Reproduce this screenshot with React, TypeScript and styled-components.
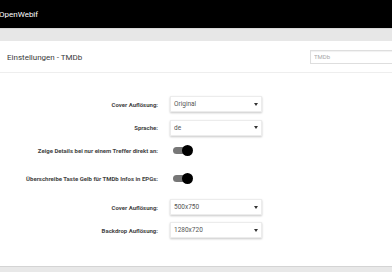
import styled, { createGlobalStyle } from "styled-components";

const GlobalStyle = createGlobalStyle`
  html, body {
    margin: 0;
    padding: 0;
    background: #fff;
    font-family: Roboto, "Liberation Sans", sans-serif;
  }
`;

const Page = styled.div`
  width: 392px;
  height: 272px;
  display: flex;
  flex-direction: column;
  overflow: hidden;
`;

const TopBar = styled.div`
  height: 28px;
  flex: none;
  background: #000;
  color: #fff;
  font-size: 8px;
  display: flex;
  align-items: center;
  text-indent: -1px;
`;

const GrayBand = styled.div`
  height: 13px;
  flex: none;
  background: #e7e7e7;
  border-top: 1px solid #d6d6d6;
  box-sizing: border-box;
`;

const Card = styled.div`
  height: 225px;
  flex: none;
  background: #fff;
  display: flex;
  flex-direction: column;
`;

const CardHeader = styled.div`
  height: 32px;
  flex: none;
  display: flex;
  align-items: center;
  justify-content: space-between;
  padding-left: 7px;
  border-bottom: 1px solid #eeeeee;
  box-sizing: border-box;
`;

const Title = styled.div`
  font-size: 8px;
  color: #3a3a3a;
  margin-top: 1px;
`;

const Search = styled.input`
  width: 90px;
  height: 14px;
  box-sizing: border-box;
  margin-right: -8px;
  border: 1px solid #dedede;
  box-shadow: inset 0 1px 1px rgba(0, 0, 0, 0.06);
  font-family: Roboto, "Liberation Sans", sans-serif;
  font-size: 6px;
  padding: 0 3px;
  color: #999;
  outline: none;
  &::placeholder {
    color: #a8a8a8;
  }
`;

const Form = styled.div`
  padding-top: 19px;
  display: flex;
  flex-direction: column;
`;

const Row = styled.div<{ $h: number }>`
  height: ${(p) => p.$h}px;
  display: grid;
  grid-template-columns: 158px 92px;
  column-gap: 12px;
  align-items: center;
`;

const Label = styled.div`
  text-align: right;
  font-size: 6px;
  font-weight: bold;
  color: #444;
  white-space: nowrap;
`;

const Select = styled.div`
  height: 16px;
  box-sizing: border-box;
  border: 1px solid #ececec;
  box-shadow: 0 1px 2px rgba(0, 0, 0, 0.22);
  display: flex;
  align-items: center;
  justify-content: space-between;
  padding: 0 3px;
  font-size: 6.5px;
  color: #555;
`;

const Caret = styled.span`
  width: 0;
  height: 0;
  border-left: 2.5px solid transparent;
  border-right: 2.5px solid transparent;
  border-top: 3px solid #333;
`;

const Toggle = styled.div`
  position: relative;
  margin-left: 3px;
  width: 17px;
  height: 7px;
  border-radius: 4px;
  background: #777;
`;

const Thumb = styled.span`
  position: absolute;
  right: -3px;
  top: -2px;
  width: 11px;
  height: 11px;
  border-radius: 50%;
  background: #000;
`;

const BottomBand = styled.div`
  flex: 1;
  background: #e8e8e8;
  border-top: 1px solid #d4d4d4;
`;

const SelectRow = ({ label, value, h }: { label: string; value: string; h: number }) => (
  <Row $h={h}>
    <Label>{label}</Label>
    <Select>
      <span>{value}</span>
      <Caret />
    </Select>
  </Row>
);

const ToggleRow = ({ label, h }: { label: string; h: number }) => (
  <Row $h={h}>
    <Label>{label}</Label>
    <div>
      <Toggle>
        <Thumb />
      </Toggle>
    </div>
  </Row>
);

export default function App() {
  return (
    <Page>
      <GlobalStyle />
      <TopBar>OpenWebif</TopBar>
      <GrayBand />
      <Card>
        <CardHeader>
          <Title>Einstellungen - TMDb</Title>
          <Search placeholder="TMDb" />
        </CardHeader>
        <Form>
          <SelectRow label="Cover Auflösung:" value="Original" h={24} />
          <SelectRow label="Sprache:" value="de" h={23} />
          <ToggleRow label="Zeige Details bei nur einem Treffer direkt an:" h={22} />
          <ToggleRow label="Überschreibe Taste Gelb für TMDb Infos in EPGs:" h={35} />
          <SelectRow label="Cover Auflösung:" value="500x750" h={22} />
          <SelectRow label="Backdrop Auflösung:" value="1280x720" h={24} />
        </Form>
      </Card>
      <BottomBand />
    </Page>
  );
}
